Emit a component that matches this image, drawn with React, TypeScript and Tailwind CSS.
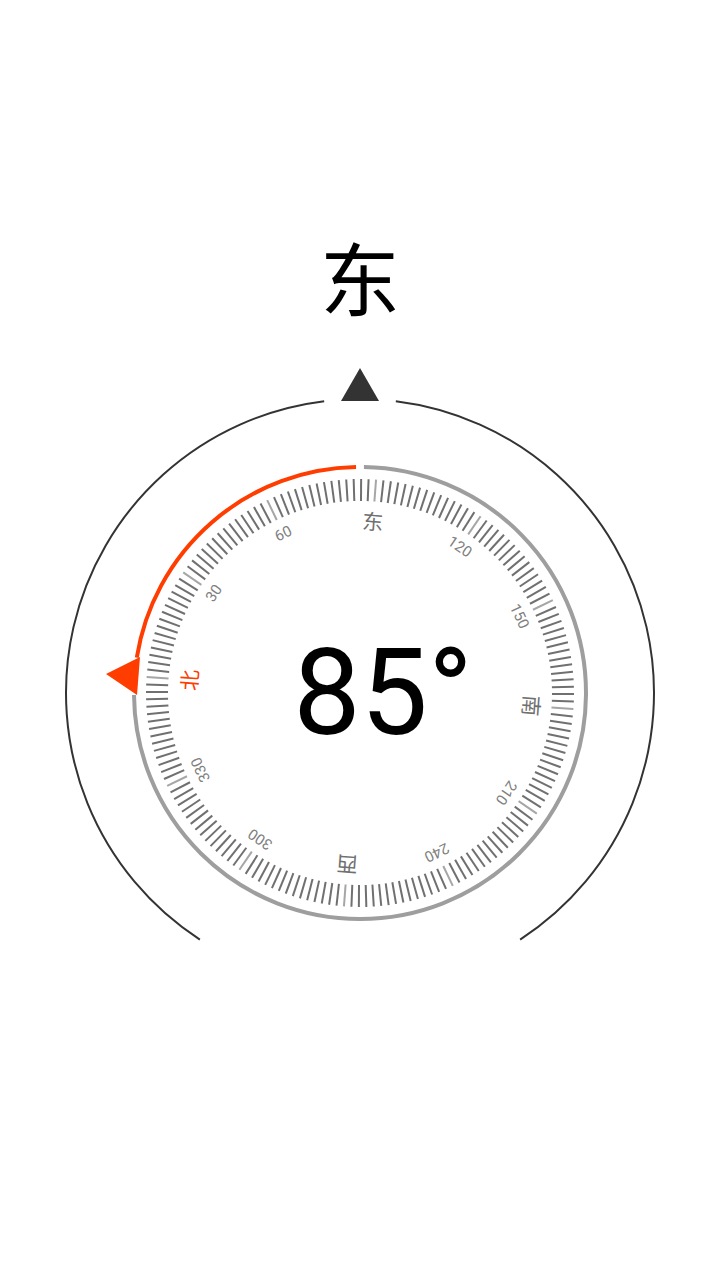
const CX = 0;
const CY = 0;
const DIAL_ROTATION = -85.7;

// point on a circle, angle in degrees clockwise from top
function polar(r: number, deg: number) {
  const a = (deg * Math.PI) / 180;
  return { x: CX + r * Math.sin(a), y: CY - r * Math.cos(a) };
}

function arc(r: number, from: number, to: number, clockwise: boolean) {
  const a = polar(r, from);
  const b = polar(r, to);
  const span = clockwise ? (to - from + 360) % 360 : (from - to + 360) % 360;
  return `M${a.x} ${a.y}A${r} ${r} 0 ${span > 180 ? 1 : 0} ${clockwise ? 1 : 0} ${b.x} ${b.y}`;
}

const ticks = Array.from({ length: 180 }, (_, i) => i * 2);

const labels = [
  { deg: 0, text: "北", r: 170, size: 21, color: "#ff3d00" },
  { deg: 30, text: "30", r: 177, size: 15, color: "#808080" },
  { deg: 60, text: "60", r: 177, size: 15, color: "#808080" },
  { deg: 90, text: "东", r: 171, size: 21, color: "#707070" },
  { deg: 120, text: "120", r: 177, size: 15, color: "#808080" },
  { deg: 150, text: "150", r: 177, size: 15, color: "#808080" },
  { deg: 180, text: "南", r: 171, size: 21, color: "#707070" },
  { deg: 210, text: "210", r: 177, size: 15, color: "#808080" },
  { deg: 240, text: "240", r: 177, size: 15, color: "#808080" },
  { deg: 270, text: "西", r: 171, size: 21, color: "#707070" },
  { deg: 300, text: "300", r: 177, size: 15, color: "#808080" },
  { deg: 330, text: "330", r: 177, size: 15, color: "#808080" },
];

function CompassDial() {
  return (
    <svg width="600" height="600" viewBox="-300 -330 600 600" className="block opacity-[0.999]">
      {/* outer ring */}
      <path d={arc(294, 7, 147, true)} fill="none" stroke="#333333" strokeWidth="2" />
      <path d={arc(294, 353, 213, false)} fill="none" stroke="#333333" strokeWidth="2" />
      <polygon points="0,-325 -19,-292 19,-292" fill="#333333" />

      {/* inner ring */}
      <path d={arc(226, 1, 269.5, true)} fill="none" stroke="#9e9e9e" strokeWidth="4" />
      <path d={arc(226, 359, 279, false)} fill="none" stroke="#ff3d00" strokeWidth="4" />
      <polygon points="-254,-19 -220,-36 -223,2" fill="#ff3d00" />

      {/* rotating scale */}
      <g transform={`rotate(${DIAL_ROTATION})`}>
        {ticks.map((deg) => (
          <line
            key={deg}
            x1="0"
            y1="-214"
            x2="0"
            y2="-192"
            transform={`rotate(${deg})`}
            stroke={deg % 30 === 0 ? "#a6a6a6" : "#707070"}
            strokeWidth="2"
          />
        ))}
        {labels.map((l) => (
          <text
            key={l.deg}
            transform={`rotate(${l.deg}) translate(0 ${-l.r})`}
            textAnchor="middle"
            dominantBaseline="central"
            fontSize={l.size}
            fill={l.color}
            fontFamily="Roboto, 'Noto Sans CJK SC', sans-serif"
          >
            {l.text}
          </text>
        ))}
      </g>
    </svg>
  );
}

export default function App() {
  return (
    <div className="flex h-[1280px] w-[720px] flex-col items-center overflow-hidden bg-white font-['Roboto','Noto_Sans_CJK_SC',sans-serif]">
      <div className="mt-[243px] h-[80px] text-[80px] leading-[80px] text-black">东</div>
      <div className="relative mt-[40px]">
        <CompassDial />
        <div className="absolute left-[323px] top-[330px] -translate-x-1/2 -translate-y-1/2 whitespace-nowrap text-[120px] leading-none text-black">
          85°
        </div>
      </div>
    </div>
  );
}
